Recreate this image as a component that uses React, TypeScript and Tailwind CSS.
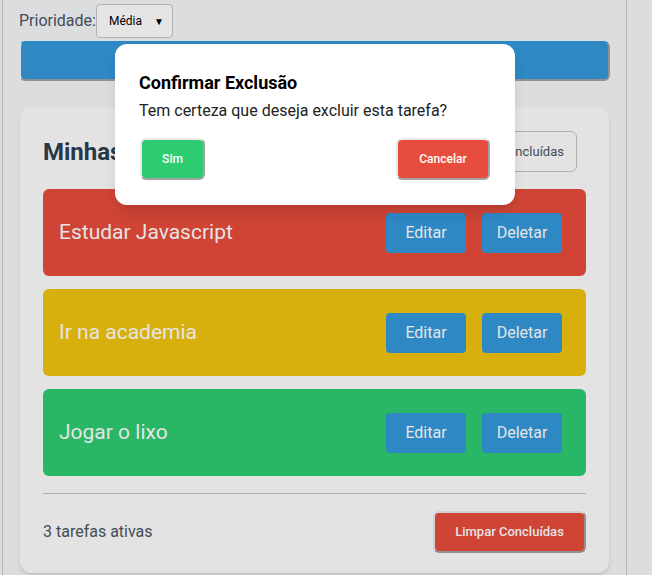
const tasks = [
  { id: 1, title: "Estudar Javascript", color: "bg-[#e74c3c]" },
  { id: 2, title: "Ir na academia", color: "bg-[#f1c40f]" },
  { id: 3, title: "Jogar o lixo", color: "bg-[#2ecc71]" },
];

const outset =
  "border-2 border-t-[#e9e9e9] border-l-[#e9e9e9] border-r-[#a3a3a3] border-b-[#a3a3a3]";

export default function App() {
  return (
    <div className="relative h-[575px] overflow-hidden bg-[#f4f6f9] font-['Roboto',sans-serif]">
      <div className="ml-[2px] w-[625px] min-h-[575px] border-x border-[#c9cacd] px-4 pt-1">
        <div className="flex items-center">
          <span className="text-base text-[#4b5563]">Prioridade:</span>
          <div className="flex h-[34px] w-[77px] items-center justify-between rounded border border-[#c4c4c4] bg-white pl-3 pr-2 text-[12px] text-black">
            <span>Média</span>
            <span className="text-[10px]">▼</span>
          </div>
        </div>

        <button className="mt-[3px] flex h-10 w-[591px] items-center justify-center rounded-md border-2 border-t-transparent border-l-[#f4f6f9] border-r-[#a3a3a3] border-b-[#a3a3a3] bg-[#3498db] text-sm font-medium text-white">
          Adicionar Tarefa
        </button>

        <div className="mt-[26px] ml-px w-[589px] rounded-xl bg-[#fdfdfd] px-[23px] pt-6 pb-5 shadow-md">
          <div className="mb-[17px] flex h-[41px] items-center justify-between">
            <h2 className="text-2xl font-bold text-[#2c3e50]">Minhas Tarefas</h2>
            <div className="flex gap-2">
              <button className="h-[41px] rounded-md border border-[#c4c4c4] px-3 text-[13px] text-[#4b5563]">Todas</button>
              <button className="h-[41px] rounded-md border border-[#c4c4c4] px-3 text-[13px] text-[#4b5563]">Pendentes</button>
              <button className="mr-[9px] h-[41px] rounded-md border border-[#c4c4c4] px-3 text-[13px] text-[#4b5563]">Concluídas</button>
            </div>
          </div>

          <div className="flex flex-col gap-[13px]">
            {tasks.map((t) => (
              <div key={t.id} className={`flex h-[87px] items-center justify-between rounded-md pl-4 pr-6 ${t.color}`}>
                <span className="text-[21px] text-white">{t.title}</span>
                <div className="flex gap-4">
                  <button className="h-10 w-20 rounded bg-[#3498db] text-base text-white">Editar</button>
                  <button className="h-10 w-20 rounded bg-[#3498db] text-base text-white">Deletar</button>
                </div>
              </div>
            ))}
          </div>

          <div className="mt-[17px] flex items-center justify-between border-t border-[#c4c4c4] pt-[17px]">
            <span className="text-base text-[#4b5563]">3 tarefas ativas</span>
            <button className={`h-[42px] w-[153px] rounded-md bg-[#e74c3c] text-[13px] font-medium text-white ${outset}`}>
              Limpar Concluídas
            </button>
          </div>
        </div>
      </div>

      <div className="absolute inset-0 bg-black/10" />

      <div className="absolute left-[115px] top-[44px] w-[400px] rounded-xl bg-white px-6 pt-[28px] pb-[25px] shadow-lg">
        <h3 className="text-lg font-bold leading-[21px] text-black">Confirmar Exclusão</h3>
        <p className="mt-1.5 text-base text-[#222]">Tem certeza que deseja excluir esta tarefa?</p>
        <div className="mt-[15px] flex justify-between px-px">
          <button className={`h-[42px] w-[65px] rounded-md bg-[#2ecc71] text-[12px] font-medium text-white ${outset}`}>Sim</button>
          <button className={`h-[42px] w-[94px] rounded-md bg-[#e74c3c] text-[12px] font-medium text-white ${outset}`}>Cancelar</button>
        </div>
      </div>
    </div>
  );
}
